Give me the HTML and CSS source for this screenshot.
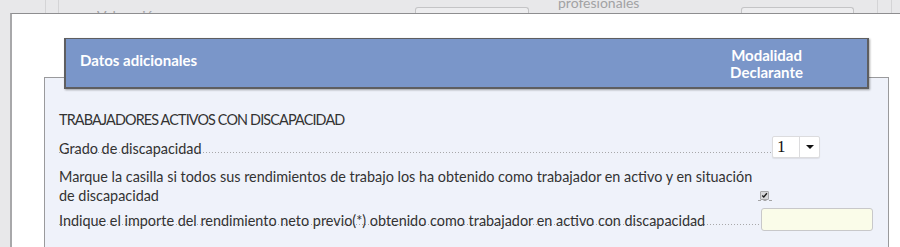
FILE: index.html
```html
<!DOCTYPE html>
<html>
  <head>
    <title>Datos adicionales</title>
    <link rel="stylesheet" href="styles.css">
  </head>
  <body>
    <div class="backdrop">
      <div class="back_strip">
        <div class="back_rule back_rule--one"></div>
        <div class="back_rule back_rule--two"></div>
        <div class="back_text back_text--left">Valoración</div>
        <div class="back_box back_box--left"></div>
        <div class="back_text back_text--right">profesionales<br>Gastos de defensa jurídica</div>
        <div class="back_box back_box--right"></div>
        <div class="back_rule back_rule--three"></div>
        <div class="back_rule back_rule--four"></div>
      </div>

      <div class="dialog">
        <div class="dialog_header">
          <span class="dialog_title">Datos adicionales</span>
          <span class="dialog_mode">Modalidad<br>Declarante</span>
        </div>

        <div class="panel">
          <p class="section_title">TRABAJADORES ACTIVOS CON DISCAPACIDAD</p>

          <div class="field_row field_row--select">
            <label class="field_label field_label--leader">Grado de discapacidad</label>
            <div class="select_box">
              <span class="select_value">1</span>
              <span class="select_button"><span class="select_arrow"></span></span>
            </div>
            <div class="select_spacer"></div>
          </div>

          <div class="field_row field_row--check">
            <label class="field_label field_label--wrap">Marque la casilla si todos sus rendimientos de trabajo los ha obtenido como trabajador en activo y en situación de discapacidad</label>
            <div class="check_cell">
              <span class="check_box">
                <svg width="9" height="9" viewBox="0 0 9 9">
                  <path d="M1.6 4.4 L3.6 6.4 L7.6 1.6" fill="none" stroke="#1a1a1a" stroke-width="1.7"/>
                </svg>
              </span>
            </div>
          </div>

          <div class="field_row field_row--input">
            <label class="field_label field_label--leader field_label--under">Indique el importe del rendimiento neto previo(*) obtenido como trabajador en activo con discapacidad</label>
            <input type="text" class="amount_input">
          </div>
        </div>
      </div>
    </div>
  </body>
</html>
```

FILE: styles.css
```css
* {
  box-sizing: border-box;
  margin: 0;
  padding: 0;
}

body {
  width: 900px;
  height: 247px;
  overflow: hidden;
  background: #e8e8ea;
  font-family: 'Lato', 'Open Sans', sans-serif;
  color: #333;
}

.backdrop {
  height: 247px;
  display: flex;
  flex-direction: column;
}

/* page behind the dialog, only its bottom edge shows */
.back_strip {
  height: 13px;
  flex: none;
  display: flex;
  align-items: flex-end;
  overflow: hidden;
  background: #e8e8ea;
  color: #a2a2a4;
  font-size: 14px;
}

.back_rule {
  width: 1px;
  height: 13px;
  background: #d4d4d6;
  flex: none;
}

.back_rule--one {
  margin-left: 45px;
}

.back_rule--two {
  margin-left: 12px;
}

.back_text--left {
  margin-left: 38px;
  line-height: 16px;
  margin-bottom: -11px;
  width: 60px;
  flex: none;
  overflow: hidden;
  white-space: nowrap;
}

.back_box {
  height: 6px;
  border: 1px solid #c4c4c6;
  border-bottom: 0;
  border-radius: 3px 3px 0 0;
  background: #ededef;
  flex: none;
}

.back_box--left {
  margin-left: 258px;
  width: 114px;
}

.back_text--right {
  margin-left: 29px;
  width: 183px;
  flex: none;
  line-height: 16px;
  margin-bottom: -14px;
  white-space: nowrap;
  overflow: hidden;
}

.back_box--right {
  width: 113px;
}

.back_rule--three {
  margin-left: 23px;
}

.back_rule--four {
  margin-left: 13px;
}

.dialog {
  flex: 1;
  display: flex;
  flex-direction: column;
  overflow: hidden;
  margin-left: 10px;
  background: #fff;
  border-top: 1px solid #8e8e90;
  border-left: 2px solid #a8a8aa;
  padding-top: 24px;
}

.dialog_header {
  position: relative;
  z-index: 1;
  flex: none;
  display: flex;
  justify-content: space-between;
  align-items: center;
  height: 51px;
  margin: 0 31px 0 52px;
  padding: 0 64px 0 14px;
  background: #7a96c9;
  border: 2px solid #5e5e60;
  border-top-width: 1px;
  box-shadow: 1px 1px 2px rgba(0, 0, 0, 0.35);
  color: #fff;
  font-weight: bold;
  font-size: 15px;
}

.dialog_title {
  padding-bottom: 6px;
}

.dialog_mode {
  text-align: center;
  line-height: 17px;
  padding-top: 1px;
}

.panel {
  flex: 1;
  margin: -12px 11px 0 32px;
  background: #eff2fa;
  border: 1px solid #9a9a9c;
  border-bottom: 0;
  padding: 32px 15px 0 14px;
  font-size: 14.4px;
}

.section_title {
  line-height: 20px;
  letter-spacing: -0.85px;
  margin-bottom: 6px;
}

.field_row {
  display: flex;
  align-items: flex-end;
}

.field_label {
  line-height: 20px;
}

/* dotted leader running from the label to its control */
.field_label--leader {
  flex: 1;
  background-image: linear-gradient(to right, #a8a8aa 50%, transparent 50%);
  background-size: 3px 1px;
  background-repeat: repeat-x;
  background-position: left bottom 6px;
}

.field_row--select .field_label {
  margin-bottom: -1px;
}

.field_label--under {
  margin-right: -12px;
}

.select_box {
  display: flex;
  width: 48px;
  height: 22px;
  background: #fff;
  border: 1px solid #dcdcde;
  border-radius: 2px;
  box-shadow: 0 1px 1px rgba(0, 0, 0, 0.08);
}

.select_value {
  width: 26px;
  padding-left: 4px;
  font-family: 'Liberation Serif', serif;
  font-size: 17px;
  line-height: 20px;
  color: #111;
}

.select_button {
  flex: 1;
  display: flex;
  justify-content: center;
  align-items: center;
  border-left: 1px solid #dcdcde;
}

.select_arrow {
  width: 0;
  height: 0;
  border-left: 4px solid transparent;
  border-right: 4px solid transparent;
  border-top: 4px solid #111;
}

.select_spacer {
  width: 53px;
}

.field_row--check {
  margin-top: 9px;
}

.field_label--wrap {
  width: 702px;
  line-height: 19px;
}

.check_cell {
  width: 112px;
  padding-bottom: 4px;
}

.check_box {
  display: block;
  position: relative;
  width: 14px;
  height: 10px;
  margin-left: -3px;
  border-bottom: 1px dashed #a4a4a6;
}

.check_box svg {
  position: absolute;
  left: 2px;
  top: 0;
  background: #d8d8da;
  border: 1px solid #a8a8aa;
  border-radius: 1px;
}

.field_row--input {
  margin-top: 3px;
}

.amount_input {
  width: 112px;
  height: 23px;
  background: #fafce9;
  border: 1px solid #c8c8ca;
  border-radius: 3px;
  outline: none;
}
```
